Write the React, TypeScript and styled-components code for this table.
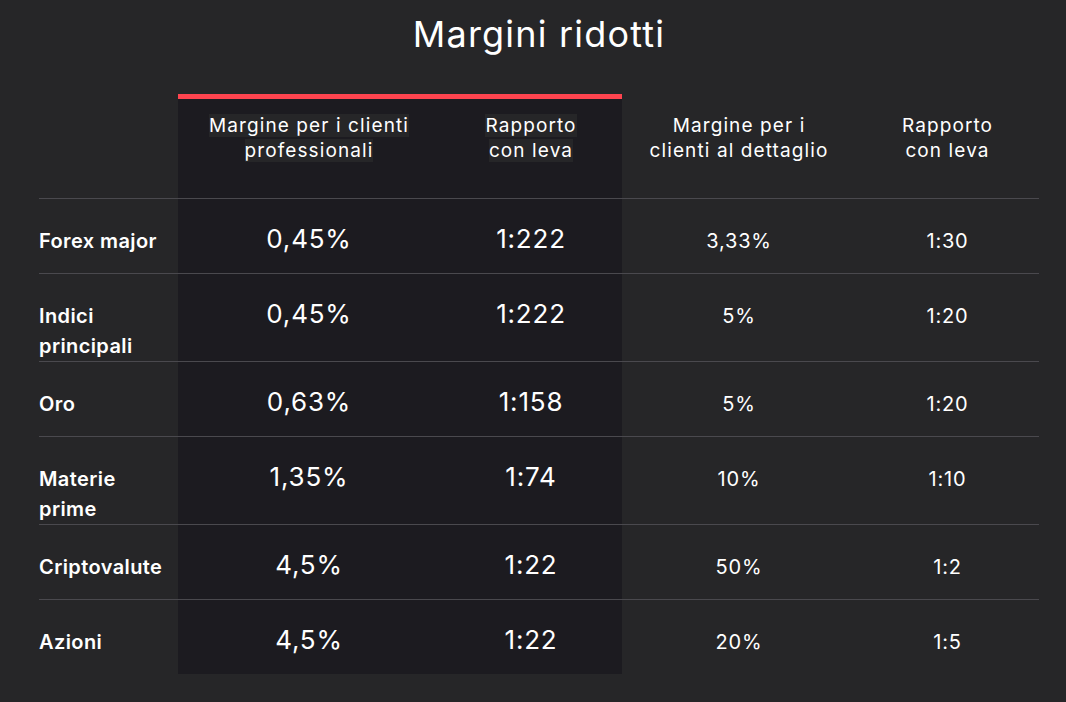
import React from "react";
import styled, { createGlobalStyle } from "styled-components";

const PAGE_BG = "#262628";
const COL_BG = "#1c1b20";
const LINE = "#4a494e";

const Global = createGlobalStyle`
  html, body { margin: 0; padding: 0; background: ${PAGE_BG}; }
  body { font-family: Inter, "Noto Sans", sans-serif; color: #fff; }
`;

const Page = styled.div`
  width: 1066px;
  height: 702px;
  box-sizing: border-box;
  padding: 13px 27px 0 39px;
  background: ${PAGE_BG};
  overflow: hidden;
`;

const Title = styled.h1`
  margin: 0 0 38px;
  font-size: 36px;
  line-height: 43px;
  font-weight: 400;
  text-align: center;
  letter-spacing: 1.2px;
`;

const Table = styled.table`
  width: 1000px;
  table-layout: fixed;
  border-collapse: separate;
  border-spacing: 0;
`;

const HeadCell = styled.th<{ $hl?: boolean }>`
  height: 84px;
  padding: 15px 4px 0;
  vertical-align: top;
  text-align: center;
  font-weight: 400;
  font-size: 19px;
  line-height: 24.5px;
  letter-spacing: 1.1px;
  border-top: 5px solid ${(p) => (p.$hl ? "#ff444f" : "transparent")};
  border-bottom: 1px solid ${LINE};
  background: ${(p) => (p.$hl ? COL_BG : "transparent")};
`;

const HeadText = styled.span`
  background: ${PAGE_BG};
`;

const Row = styled.tr<{ $last?: boolean }>`
  & > td {
    border-bottom: ${(p) => (p.$last ? "none" : `1px solid ${LINE}`)};
  }
`;

const Label = styled.td`
  height: 47px;
  padding: 27px 0 0;
  vertical-align: top;
  font-size: 20px;
  line-height: 30px;
  font-weight: 600;
  letter-spacing: 0.4px;
`;

const Value = styled.td<{ $hl?: boolean }>`
  height: ${(p) => (p.$hl ? "49px" : "47px")};
  padding: ${(p) => (p.$hl ? "25px" : "27px")} 0 0;
  vertical-align: top;
  text-align: center;
  background: ${(p) => (p.$hl ? COL_BG : "transparent")};
  font-size: ${(p) => (p.$hl ? "26px" : "20px")};
  line-height: ${(p) => (p.$hl ? "29px" : "31px")};
  letter-spacing: 0.8px;
`;

const rows: [string, string, string, string, string][] = [
  ["Forex major", "0,45%", "1:222", "3,33%", "1:30"],
  ["Indici principali", "0,45%", "1:222", "5%", "1:20"],
  ["Oro", "0,63%", "1:158", "5%", "1:20"],
  ["Materie prime", "1,35%", "1:74", "10%", "1:10"],
  ["Criptovalute", "4,5%", "1:22", "50%", "1:2"],
  ["Azioni", "4,5%", "1:22", "20%", "1:5"],
];

export default function App() {
  return (
    <>
      <Global />
      <Page>
        <Title>Margini ridotti</Title>
        <Table>
          <colgroup>
            <col style={{ width: 139 }} />
            <col style={{ width: 262 }} />
            <col style={{ width: 182 }} />
            <col style={{ width: 234 }} />
            <col style={{ width: 183 }} />
          </colgroup>
          <thead>
            <tr>
              <HeadCell />
              <HeadCell $hl>
                <HeadText>
                  Margine per i clienti
                  <br />
                  professionali
                </HeadText>
              </HeadCell>
              <HeadCell $hl>
                <HeadText>
                  Rapporto
                  <br />
                  con leva
                </HeadText>
              </HeadCell>
              <HeadCell>
                <HeadText>
                  Margine per i
                  <br />
                  clienti al dettaglio
                </HeadText>
              </HeadCell>
              <HeadCell>
                <HeadText>
                  Rapporto
                  <br />
                  con leva
                </HeadText>
              </HeadCell>
            </tr>
          </thead>
          <tbody>
            {rows.map((r, i) => (
              <Row key={r[0]} $last={i === rows.length - 1}>
                <Label>{r[0]}</Label>
                <Value $hl>{r[1]}</Value>
                <Value $hl>{r[2]}</Value>
                <Value>{r[3]}</Value>
                <Value>{r[4]}</Value>
              </Row>
            ))}
          </tbody>
        </Table>
      </Page>
    </>
  );
}
